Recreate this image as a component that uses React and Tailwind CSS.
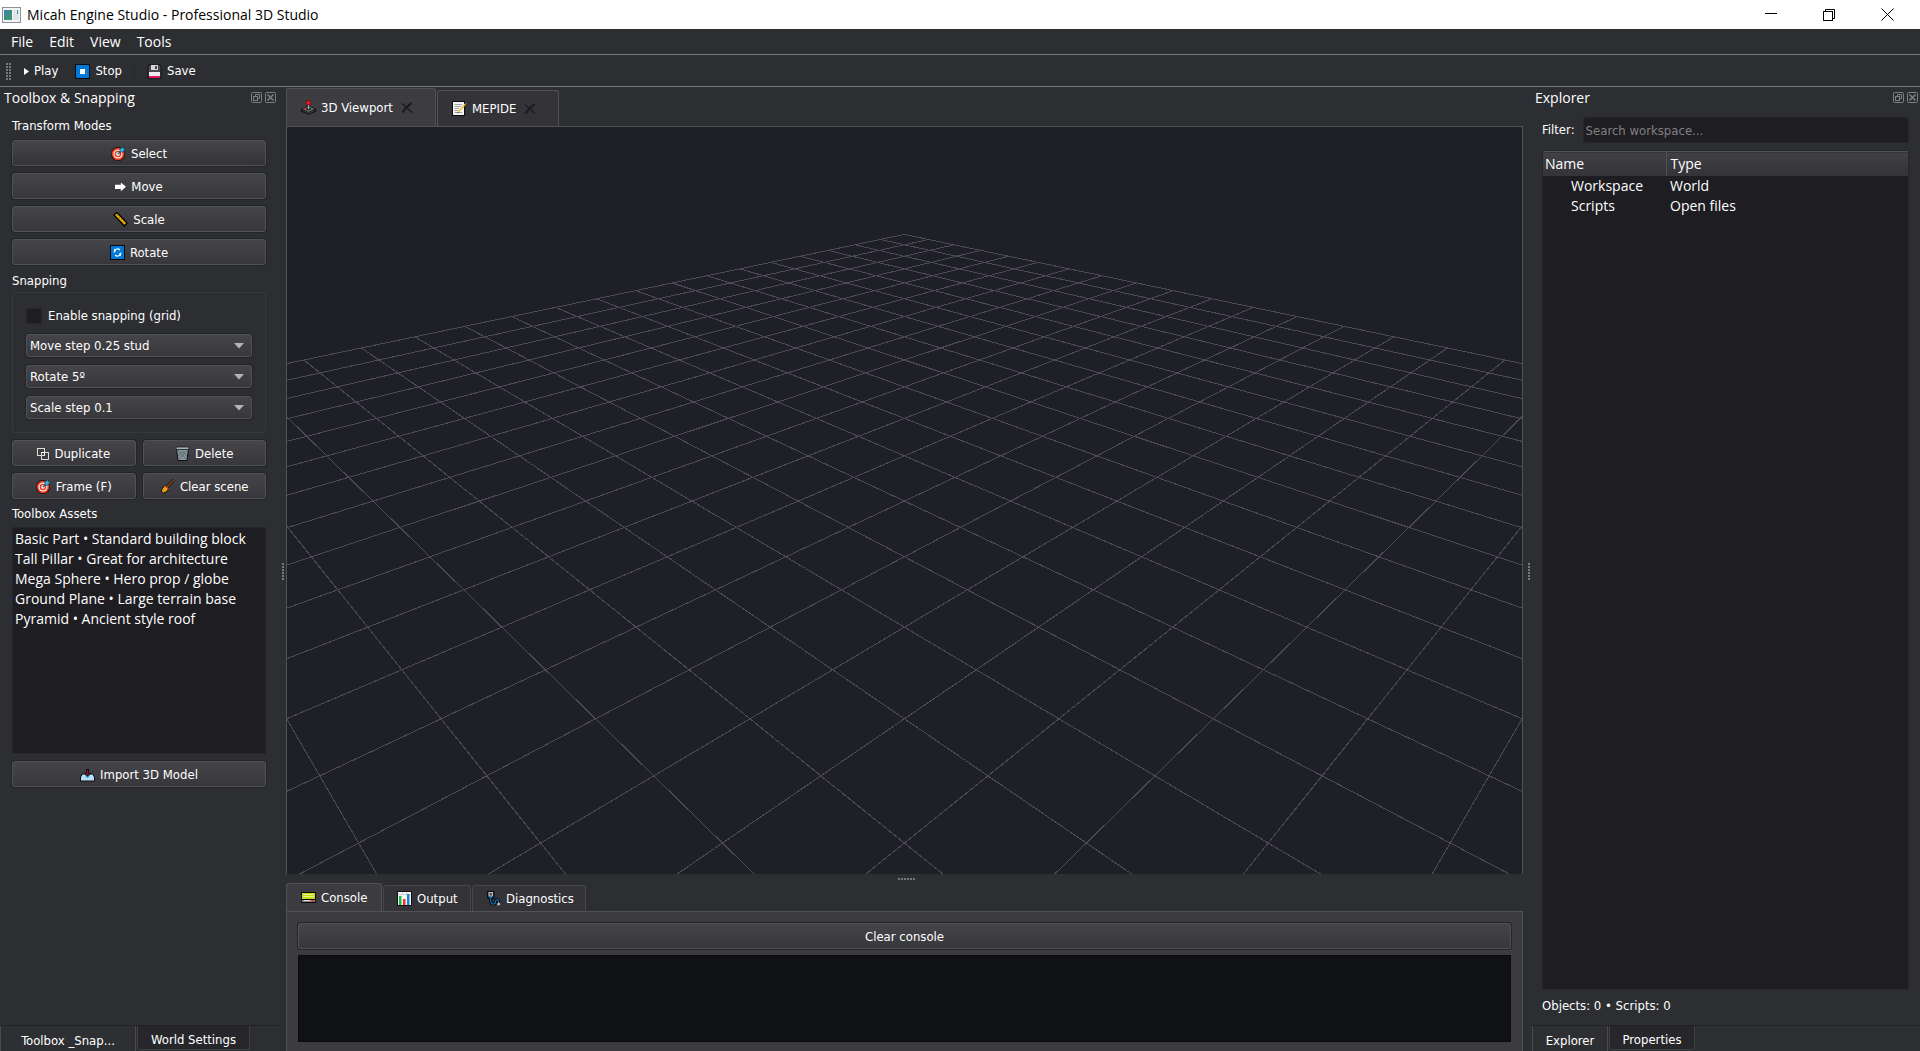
import React, { useState } from "react";

const uiFont = "font-['DejaVu_Sans_Condensed','DejaVu_Sans','Noto_Sans',sans-serif] text-[13px]";
const wideFont = "font-['Open_Sans','Noto_Sans',sans-serif] text-[14px]";

const buttonLook =
  "flex h-[26px] items-center justify-center gap-[5px] rounded-[3px] border border-[#515256] bg-linear-to-b from-[#444449] to-[#38383c] pt-px shadow-[0_0_0_1px_#232427]";

const assets = [
  "Basic Part • Standard building block",
  "Tall Pillar • Great for architecture",
  "Mega Sphere • Hero prop / globe",
  "Ground Plane • Large terrain base",
  "Pyramid • Ancient style roof",
];

const rows = [
  { name: "Workspace", type: "World" },
  { name: "Scripts", type: "Open files" },
];

// * icons
function Icon({ children, size = 15 }) {
  return (
    <svg width={size} height={size} viewBox="0 0 15 15" className="shrink-0" aria-hidden="true">
      {children}
    </svg>
  );
}

const TargetIcon = () => (
  <Icon>
    <circle cx="7" cy="8" r="7" fill="#140a0a" />
    <circle cx="7" cy="8" r="6.300" fill="#e8391f" />
    <circle cx="7" cy="8" r="4.600" fill="#f6ebe8" />
    <circle cx="7" cy="8" r="3.300" fill="#e8391f" />
    <circle cx="7" cy="8" r="1.900" fill="#f6ebe8" />
    <path d="M7 8 L10 5" stroke="#1d5f80" strokeWidth="1.4" />
    <path d="M9 6 V3 L12 0.5 V2.5 H14.5 L12 6 Z" fill="#2fb9ee" stroke="#0c2c3a" strokeWidth="0.6" />
  </Icon>
);

const ArrowIcon = () => (
  <Icon size={11}>
    <path d="M0 5 H8 V2 L15 8 L8 14 V11 H0 Z" fill="#fff" />
  </Icon>
);

const RulerIcon = () => (
  <Icon>
    <path d="M1 3 L4 0.5 L14 11 L11.5 14 Z" fill="#f0b010" stroke="#0a0803" strokeWidth="1.5" />
    <path d="M5 3 L4 4 M7 5 L6 6 M9 7 L8 8 M11 9.5 L10 10.5" stroke="#7a5705" strokeWidth="0.8" />
  </Icon>
);

const RotateIcon = () => (
  <Icon>
    <rect width="15" height="15" fill="#05080c" />
    <rect x="1" y="1" width="13" height="13" fill="#0078d7" />
    <path d="M4 7.5 A3.5 3.5 0 0 1 10 5 M11 7.5 A3.5 3.5 0 0 1 5 10" fill="none" stroke="#fff" strokeWidth="1.1" />
    <path d="M4 3.500 V6.500 H6.500 Z M11 11.500 V8.500 H8.500 Z" fill="#fff" />
  </Icon>
);

const StopIcon = () => (
  <Icon>
    <rect width="15" height="15" fill="#05080c" />
    <rect x="1" y="1" width="13" height="13" fill="#0078d7" />
    <rect x="5" y="5" width="5" height="5" fill="#fff" />
  </Icon>
);

const PlayIcon = () => (
  <svg width="5" height="7" viewBox="0 0 5 7" className="shrink-0" aria-hidden="true">
    <path d="M0 0 L5 3.5 L0 7 Z" fill="#fff" />
  </svg>
);

const SaveIcon = () => (
  <Icon>
    <path d="M1 1 H13 L14 2 V14 H1 Z" fill="#4a4a4e" stroke="#101012" strokeWidth="1" />
    <rect x="4" y="1" width="7" height="5" fill="#d6d6d8" />
    <rect x="8" y="2" width="2" height="3" fill="#47474b" />
    <rect x="2" y="8" width="11" height="4" fill="#ececee" />
    <rect x="2" y="12" width="11" height="2" fill="#e0175c" />
  </Icon>
);

const DuplicateIcon = () => (
  <svg width="12" height="12" viewBox="0 0 12 12" className="shrink-0" fill="none" stroke="#dfdfd8" aria-hidden="true">
    <rect x="0.5" y="0.5" width="7" height="7" />
    <rect x="4.5" y="4.5" width="7" height="7" />
    <path d="M4.5 4.5 H7.5 V7.5" stroke="#fff" />
  </svg>
);

const TrashIcon = () => (
  <Icon>
    <path d="M1.5 3 H13.5 L12 14.5 H3 Z" fill="#84949a" stroke="#0d1012" strokeWidth="1" />
    <path d="M3.5 5 L11 13 M7 5 L12 10 M11.5 5 L4 13 M8 5 L3 10" stroke="#536066" strokeWidth="0.8" />
    <rect x="1" y="1" width="13" height="2.5" rx="1" fill="#a7b6bb" stroke="#0d1012" strokeWidth="0.7" />
  </Icon>
);

const BroomIcon = () => (
  <Icon>
    <path d="M7 8 L14 1" stroke="#120a06" strokeWidth="3" />
    <path d="M7 8 L14 1" stroke="#8a4a22" strokeWidth="1.4" />
    <path d="M4.500 6.500 L8.500 10 Q7 13.500 3.500 14 L1 12 Q2.500 9.500 4.500 6.500 Z" fill="#f5a81c" stroke="#120a06" strokeWidth="1" />
    <path d="M5 7 L8.500 10" stroke="#d9482b" strokeWidth="1.2" />
    <path d="M3 12.500 L5 10 M5 13 L6.500 11" stroke="#b8700c" strokeWidth="0.7" />
  </Icon>
);

const ImportIcon = () => (
  <Icon>
    <path d="M2.500 7 H12.500 L14.500 10 V14 H0.500 V10 Z" fill="#b9dff8" stroke="#0a0e12" strokeWidth="1" />
    <path d="M5 8 H10 L9 10 L7.500 11 L6 10 Z" fill="#3a96dd" />
    <path d="M6 2 H9 V6 H11.500 L7.500 9.500 L3.500 6 H6 Z" fill="#120a0d" />
    <path d="M7 3 H8 V6 H9.500 L7.500 8.500 L5.500 6 H7 Z" fill="#a01028" />
  </Icon>
);

const JoystickIcon = () => (
  <Icon>
    <path d="M0 9 L7.500 5.500 L15 9 V11.500 L7.500 15 L0 11.500 Z" fill="#101012" />
    <path d="M1.500 9 L7.500 6.200 L13.500 9 L7.500 12 Z" fill="#6d6d70" />
    <path d="M1.500 9.800 L7.500 12.800 L13.500 9.800 V11 L7.500 14 L1.500 11 Z" fill="#3f3f42" />
    <ellipse cx="7.500" cy="9" rx="2.500" ry="1.200" fill="#222224" />
    <rect x="7" y="4" width="1.200" height="5" fill="#b5b5b8" />
    <rect x="2.600" y="8" width="2" height="1.200" fill="#e0182a" />
    <circle cx="7.500" cy="2.800" r="2.400" fill="#e8141e" stroke="#4a0408" strokeWidth="0.500" />
  </Icon>
);

const MemoIcon = () => (
  <Icon>
    <rect x="0.500" y="0.500" width="12" height="14" fill="#f3f3f1" stroke="#0c0c0c" />
    <path d="M2.500 3.500 H10 M2.500 5.500 H9 M2.500 7.500 H7 M2.500 9.500 H6 M2.500 11.500 H10" stroke="#9b9b9b" strokeWidth="0.900" />
    <path d="M13.500 3 L6.500 10.800" stroke="#f2b62a" strokeWidth="1.400" />
    <path d="M14.300 2 L13.300 3.200" stroke="#8c5a4a" strokeWidth="1.500" />
    <path d="M6.500 11 L5.500 12" stroke="#2a2a2a" />
  </Icon>
);

const ConsoleIcon = () => (
  <Icon>
    <rect y="2" width="15" height="11" fill="#0a0a0a" />
    <rect x="1" y="3" width="13" height="6" fill="#c7dc1c" />
    <path d="M2.500 4.500 H12.500 M2.500 6.500 H12.500" stroke="#e8f28a" />
    <rect x="1" y="10" width="13" height="2" fill="#8a8a8d" />
    <path d="M3 10.500 H9" stroke="#dedede" />
    <rect x="11" y="10" width="2" height="2" fill="#e33b2c" />
  </Icon>
);

const ChartIcon = () => (
  <Icon>
    <rect x="0.500" y="0.500" width="14" height="14" fill="#f5f5f5" stroke="#101010" />
    <path d="M1 3.500 H14 M5.500 1 V3 M9.500 1 V3" stroke="#d0d0d0" />
    <rect x="2" y="5" width="2.500" height="9" fill="#16b94a" />
    <rect x="6" y="8" width="2.500" height="6" fill="#e8391f" />
    <rect x="10" y="3" width="2.500" height="11" fill="#1684d8" />
  </Icon>
);

const StethoscopeIcon = () => (
  <Icon>
    <path d="M2 0.500 H7.500 V6 L4.700 8.500 L2 6 Z" fill="#4a5056" stroke="#08090a" strokeWidth="2" />
    <path d="M4.700 8 Q4 13.500 8 13 Q10 12 9.500 9.500 Q11 7.500 12.500 10 V13" fill="none" stroke="#08090a" strokeWidth="3" />
    <path d="M3 1.500 H6.500 V5 H3 Z" fill="none" stroke="#b5bcc2" strokeWidth="1.200" />
    <path d="M2.500 5 Q4.700 8.500 7 5 M4.700 7 Q4 13.500 8 13 Q10 12 9.500 9.500 Q11 7.500 12.500 10 V12" fill="none" stroke="#1270b8" strokeWidth="1.200" />
    <circle cx="12.700" cy="13" r="1.500" fill="#b5bcc2" />
  </Icon>
);

const AppIcon = () => (
  <svg width="19" height="16" viewBox="0 0 19 16" className="shrink-0" aria-hidden="true">
    <defs>
      <linearGradient id="appFill" x1="0" y1="0" x2="1" y2="1">
        <stop offset="0" stopColor="#3f7fae" />
        <stop offset="1" stopColor="#3f9c62" />
      </linearGradient>
    </defs>
    <rect x="0.500" y="0.500" width="18" height="15" fill="#f1f3f4" stroke="#8b9297" />
    <rect x="2" y="3" width="8" height="10" fill="url(#appFill)" />
    <rect x="11" y="3" width="6" height="10" fill="#dfe4e8" />
    <rect x="15" y="3" width="1" height="4" fill="#3f9c8a" />
  </svg>
);

const FloatIcon = () => (
  <svg width="11" height="11" viewBox="0 0 11 11" fill="none" stroke="#7d7e81" aria-hidden="true">
    <rect x="0.500" y="0.500" width="10" height="10" rx="1" />
    <path d="M4.500 4.500 V2.500 H8.500 V6.500 H6.500" />
    <rect x="2.500" y="4.500" width="4" height="4" />
  </svg>
);

const CloseIcon = () => (
  <svg width="11" height="11" viewBox="0 0 11 11" fill="none" stroke="#7d7e81" aria-hidden="true">
    <rect x="0.500" y="0.500" width="10" height="10" rx="1" />
    <path d="M2.500 2.500 L8.500 8.500 M8.500 2.500 L2.500 8.500" strokeWidth="1.600" />
  </svg>
);

const TabCloseIcon = () => (
  <svg width="12" height="12" viewBox="0 0 12 12" fill="none" stroke="#1c1c1e" aria-hidden="true">
    <path d="M1 1.500 Q5 5 11 10.500" strokeWidth="1.400" />
    <path d="M10.500 1 Q6 4 1.500 10.500" strokeWidth="2.200" />
  </svg>
);

// * perspective floor, far corner at the top centre
function GridFloor() {
  const count = 20;
  const project = (a, b) => {
    const depth = 43.24 - (a + b);
    return [617.4 + ((a - b) * 1021) / depth, 9231 / depth - 106.2];
  };
  const lines = [];
  for (let i = 0; i <= count; i++) {
    lines.push([project(i, 0), project(i, count)]);
    lines.push([project(0, i), project(count, i)]);
  }
  return (
    <svg
      viewBox="0 0 1235 746"
      preserveAspectRatio="xMidYMin slice"
      className="h-full w-full"
      shapeRendering="crispEdges"
      stroke="#4b4a56"
      aria-hidden="true"
    >
      {lines.map(([p, q], i) => (
        <line key={i} x1={p[0]} y1={p[1]} x2={q[0]} y2={q[1]} />
      ))}
    </svg>
  );
}

function DockHeader({ title }) {
  return (
    <div className="flex h-[20px] items-center justify-between">
      <h2 className={wideFont}>{title}</h2>
      <div className="flex gap-[3px]">
        <button aria-label={`Float ${title}`}><FloatIcon /></button>
        <button aria-label={`Close ${title}`}><CloseIcon /></button>
      </div>
    </div>
  );
}

function PushButton({ icon, children, onClick, pressed }) {
  return (
    <button
      onClick={onClick}
      className={`${buttonLook} ${pressed ? "from-[#36363a] to-[#343438]" : ""}`}
    >
      {icon}
      <span>{children}</span>
    </button>
  );
}

function Combo({ label, options }) {
  return (
    <div className="grid items-center">
      <select
        aria-label={label}
        className="col-start-1 row-start-1 h-[23px] appearance-none rounded-[3px] border border-[#515256] bg-linear-to-b from-[#444449] to-[#38383c] px-[3px] shadow-[0_0_0_1px_#232427]"
      >
        {options.map((option) => (
          <option key={option}>{option}</option>
        ))}
      </select>
      <svg width="10" height="6" viewBox="0 0 10 6" className="pointer-events-none col-start-1 row-start-1 mr-2 justify-self-end" aria-hidden="true">
        <path d="M0 0 H10 L5 5.500 Z" fill="#b4b4b6" />
      </svg>
    </div>
  );
}

function DockTabs({ tabs }) {
  return (
    <div className="flex h-[26px] shrink-0 border-t border-[#222326]">
      {tabs.map((tab, i) => (
        <button
          key={tab.name}
          className={
            i === 0
              ? `border-x border-[#4a4b4f] bg-[#2e2f33] pt-1 ${tab.width}`
              : `mb-px ml-px rounded-b-[3px] border border-t-0 border-[#3f4044] bg-[#27272b] pt-1 ${tab.width}`
          }
        >
          {tab.name}
        </button>
      ))}
    </div>
  );
}

function Dots({ vertical }) {
  return (
    <div className={`flex gap-px ${vertical ? "flex-col" : ""}`}>
      {[0, 1, 2, 3, 4, 5].map((n) => (
        <span key={n} className="size-[2px] bg-[#77787b]" />
      ))}
    </div>
  );
}

function ViewTab({ icon, name, active }) {
  return (
    <div
      className={`flex items-center justify-between rounded-t-[3px] border border-b-0 border-[#515256] pr-[22px] pl-[14px] ${
        active ? "h-[38px] w-[150px] bg-[#3c3c41]" : "ml-px h-[36px] w-[122px] bg-[#333338]"
      }`}
    >
      <button className="flex items-center gap-[5px]">
        {icon}
        {name}
      </button>
      <button aria-label={`Close ${name}`}><TabCloseIcon /></button>
    </div>
  );
}

export default function App() {
  // * the transform mode picked in the toolbox
  const [mode, setMode] = useState("Select");
  const [filter, setFilter] = useState("");

  const modes = [
    { name: "Select", icon: <TargetIcon /> },
    { name: "Move", icon: <ArrowIcon /> },
    { name: "Scale", icon: <RulerIcon /> },
    { name: "Rotate", icon: <RotateIcon /> },
  ];

  const visibleRows = rows.filter((row) => row.name.toLowerCase().includes(filter.toLowerCase()));

  return (
    <div className={`flex h-screen flex-col overflow-hidden bg-[#2d2e32] text-white ${uiFont}`}>
      {/* title bar */}
      <header className="flex h-[29px] shrink-0 items-center bg-white pr-1 pl-[2px] text-black">
        <AppIcon />
        <h1 className={`ml-[6px] flex-1 ${wideFont}`}>Micah Engine Studio - Professional 3D Studio</h1>
        <button aria-label="Minimize" className="flex h-full w-[58px] items-center justify-center">
          <svg width="12" height="12" viewBox="0 0 12 12" stroke="#000"><path d="M0 4.500 H12" /></svg>
        </button>
        <button aria-label="Restore" className="flex h-full w-[58px] items-center justify-center">
          <svg width="12" height="12" viewBox="0 0 12 12" fill="none" stroke="#000">
            <rect x="0.500" y="2.500" width="9" height="9" />
            <path d="M2.500 2 V0.500 H11.500 V9.500 H10" />
          </svg>
        </button>
        <button aria-label="Close" className="flex h-full w-[58px] items-center justify-center">
          <svg width="13" height="13" viewBox="0 0 13 13" stroke="#000"><path d="M0.500 0.500 L12.500 12.500 M12.500 0.500 L0.500 12.500" /></svg>
        </button>
      </header>

      <nav className={`flex h-[26px] shrink-0 items-center gap-4 border-b border-[#77787a] pl-[11px] ${wideFont}`}>
        <button>File</button>
        <button>Edit</button>
        <button>View</button>
        <button>Tools</button>
      </nav>

      {/* toolbar */}
      <div className="flex h-[32px] shrink-0 items-center border-b border-[#77787a] pt-px pl-[6px]">
        <div className="flex gap-px">
          <Dots vertical />
          <Dots vertical />
        </div>
        <button className="ml-[13px] flex items-center gap-[5px]"><PlayIcon />Play</button>
        <button className="ml-[17px] flex items-center gap-[5px]"><StopIcon />Stop</button>
        <span className="ml-[12px] h-[14px] w-px bg-[#26272a]" />
        <button className="ml-[12px] flex items-center gap-[5px]"><SaveIcon />Save</button>
      </div>

      <main className="flex min-h-0 flex-1">
        {/* toolbox */}
        <aside className="flex w-[280px] shrink-0 flex-col">
          <div className="pr-1 pl-1"><DockHeader title="Toolbox & Snapping" /></div>
          <div className="flex min-h-0 flex-1 flex-col pr-[14px] pl-[12px]">
            <h3 className="mt-[11px] h-[22px] leading-[16px]">Transform Modes</h3>
            <div className="flex flex-col gap-[7px]">
              {modes.map((m) => (
                <PushButton key={m.name} icon={m.icon} pressed={mode === m.name} onClick={() => setMode(m.name)}>
                  {m.name}
                </PushButton>
              ))}
            </div>
            <h3 className="mt-2 h-[19px] leading-[16px]">Snapping</h3>
            <div className="flex h-[141px] flex-col gap-2 rounded-[3px] border border-[#37383c] px-[13px] pt-[13px]">
              <label className="flex h-[20px] items-center gap-[6px]">
                <input type="checkbox" className="size-[16px] appearance-none border border-[#26262a] bg-[#1e1d22] checked:bg-[#0078d7]" />
                Enable snapping (grid)
              </label>
              <Combo label="Move step" options={["Move step 0.25 stud", "Move step 0.5 stud", "Move step 1 stud"]} />
              <Combo label="Rotate step" options={["Rotate 5º", "Rotate 15º", "Rotate 45º"]} />
              <Combo label="Scale step" options={["Scale step 0.1", "Scale step 0.25", "Scale step 0.5"]} />
            </div>
            <div className="mt-[7px] grid grid-cols-2 gap-[7px]">
              <PushButton icon={<DuplicateIcon />}>Duplicate</PushButton>
              <PushButton icon={<TrashIcon />}>Delete</PushButton>
              <PushButton icon={<TargetIcon />}>Frame (F)</PushButton>
              <PushButton icon={<BroomIcon />}>Clear scene</PushButton>
            </div>
            <h3 className="mt-[7px] h-[21px] leading-[16px]">Toolbox Assets</h3>
            <ul className={`h-[227px] border border-[#26262a] bg-[#1e1d22] px-[2px] pt-px ${wideFont}`}>
              {assets.map((asset) => (
                <li key={asset} className="h-[20px] leading-[20px] whitespace-nowrap">{asset}</li>
              ))}
            </ul>
            <div className="mt-[7px] grid">
              <PushButton icon={<ImportIcon />}>Import 3D Model</PushButton>
            </div>
          </div>
          <DockTabs tabs={[{ name: "Toolbox _Snap...", width: "w-[136px]" }, { name: "World Settings", width: "w-[113px]" }]} />
        </aside>

        <div className="flex w-[6px] shrink-0 items-center justify-center pt-1"><Dots vertical /></div>

        {/* centre */}
        <section className="flex min-w-0 flex-1 flex-col">
          <div className="flex h-[39px] shrink-0 items-end">
            <ViewTab icon={<JoystickIcon />} name="3D Viewport" active />
            <ViewTab icon={<MemoIcon />} name="MEPIDE" />
          </div>
          <div className="min-h-0 flex-1 border border-b-0 border-[#515256] bg-[#1f1f28]">
            <GridFloor />
          </div>
          <div className="flex h-[9px] shrink-0 items-center justify-center pl-1"><Dots /></div>
          <div className="flex h-[28px] shrink-0 items-end">
            <button className="flex h-[28px] w-[96px] items-center gap-[5px] rounded-t-[3px] border border-b-0 border-[#515256] bg-[#3b3b40] pl-[14px]">
              <ConsoleIcon />Console
            </button>
            <button className="ml-px flex h-[26px] w-[88px] items-center gap-[5px] rounded-t-[3px] border border-b-0 border-[#46474b] bg-[#333338] pl-[13px]">
              <ChartIcon />Output
            </button>
            <button className="ml-px flex h-[26px] w-[114px] items-center gap-[5px] rounded-t-[3px] border border-b-0 border-[#46474b] bg-[#333338] pl-[13px]">
              <StethoscopeIcon />Diagnostics
            </button>
          </div>
          <div className="flex h-[140px] shrink-0 flex-col gap-[6px] border border-b-0 border-[#515256] bg-[#3b3b40] px-[11px] pt-[11px] pb-[9px]">
            <button className={buttonLook}>Clear console</button>
            <textarea aria-label="Console output" readOnly className="min-h-0 flex-1 resize-none border border-[#0c0c0f] bg-[#101115]" />
          </div>
        </section>

        <div className="flex w-[9px] shrink-0 items-center justify-center pt-1 pl-[2px]"><Dots vertical /></div>

        {/* explorer */}
        <aside className="flex w-[388px] shrink-0 flex-col">
          <div className="pr-[2px] pl-[3px]"><DockHeader title="Explorer" /></div>
          <div className="flex min-h-0 flex-1 flex-col pr-[11px] pl-[10px]">
            <div className="mt-[10px] flex h-[26px] items-center gap-2">
              <label htmlFor="filter">Filter:</label>
              <input
                id="filter"
                value={filter}
                onChange={(e) => setFilter(e.target.value)}
                placeholder="Search workspace..."
                className="h-full min-w-0 flex-1 rounded-[3px] border border-[#26262a] bg-[#1e1d22] px-[2px] placeholder:text-[#808083]"
              />
            </div>
            <div className="mt-[7px] min-h-0 flex-1 border border-[#26262a] bg-[#1e1d22]">
              <table className={`w-full table-fixed border-collapse text-left ${wideFont}`}>
                <thead>
                  <tr className="h-[24px] border-t border-[#515256] bg-linear-to-b from-[#404045] to-[#343438] leading-[20px]">
                    <th className="w-[123px] border-r border-[#515256] p-0 pl-[2px] font-normal">Name</th>
                    <th className="p-0 pl-1 font-normal">Type</th>
                  </tr>
                </thead>
                <tbody>
                  {visibleRows.map((row) => (
                    <tr key={row.name} className="h-[20px] leading-[20px]">
                      <td className="p-0 pl-[28px]">{row.name}</td>
                      <td className="p-0 pl-1">{row.type}</td>
                    </tr>
                  ))}
                </tbody>
              </table>
            </div>
            <p className="mt-2 mb-[11px] leading-[16px]">Objects: 0 • Scripts: 0</p>
          </div>
          <DockTabs tabs={[{ name: "Explorer", width: "w-[76px]" }, { name: "Properties", width: "w-[86px]" }]} />
        </aside>
      </main>
    </div>
  );
}
